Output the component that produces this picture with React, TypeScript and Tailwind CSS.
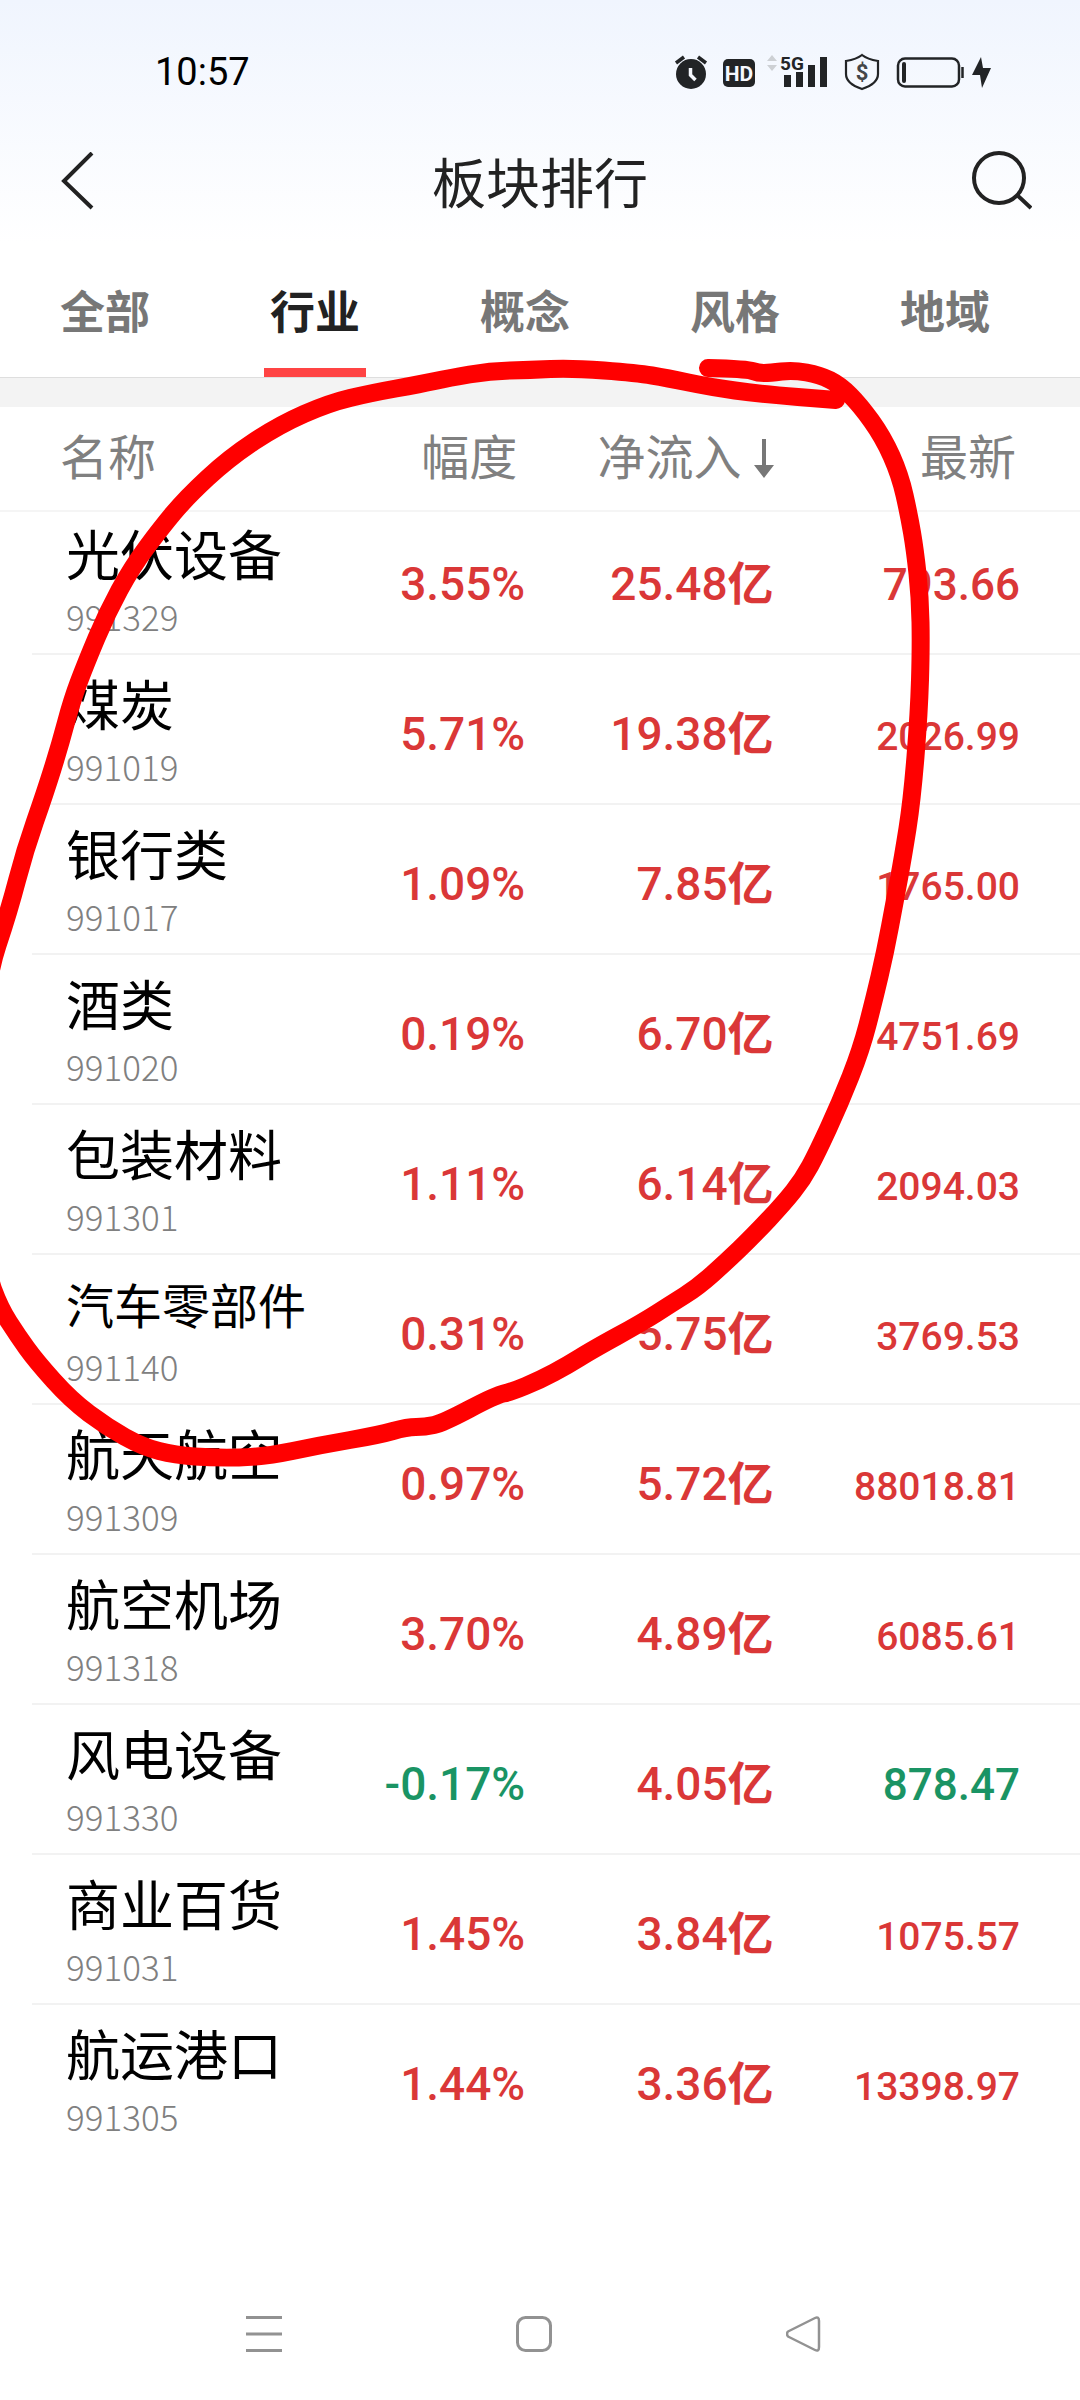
import { useState } from "react";

interface Sector {
    name: string;
    code: string;
    change: string;
    inflow: string;
    latest: string;
}

const tabs = ["全部", "行业", "概念", "风格", "地域"];

// inflow is in 亿
const sectors: Sector[] = [
    { name: "光伏设备", code: "991329", change: "3.55%", inflow: "25.48", latest: "793.66" },
    { name: "煤炭", code: "991019", change: "5.71%", inflow: "19.38", latest: "2026.99" },
    { name: "银行类", code: "991017", change: "1.09%", inflow: "7.85", latest: "1765.00" },
    { name: "酒类", code: "991020", change: "0.19%", inflow: "6.70", latest: "4751.69" },
    { name: "包装材料", code: "991301", change: "1.11%", inflow: "6.14", latest: "2094.03" },
    { name: "汽车零部件", code: "991140", change: "0.31%", inflow: "5.75", latest: "3769.53" },
    { name: "航天航空", code: "991309", change: "0.97%", inflow: "5.72", latest: "88018.81" },
    { name: "航空机场", code: "991318", change: "3.70%", inflow: "4.89", latest: "6085.61" },
    { name: "风电设备", code: "991330", change: "-0.17%", inflow: "4.05", latest: "878.47" },
    { name: "商业百货", code: "991031", change: "1.45%", inflow: "3.84", latest: "1075.57" },
    { name: "航运港口", code: "991305", change: "1.44%", inflow: "3.36", latest: "13398.97" },
];

// Freehand pen mark, in drawing order
const penPoints = [
    [708, 368], [747, 369], [758, 373], [770, 373], [793, 370], [820, 375], [840, 385], [860, 405], [883, 437],
    [900, 475], [909, 515], [915, 550], [920, 597], [921, 647], [919, 713], [912, 800], [903, 857], [895, 900],
    [885, 953], [874, 1000], [861, 1050], [840, 1103], [817, 1153], [803, 1179], [784, 1203], [753, 1236],
    [726, 1262], [698, 1287], [671, 1304], [643, 1322], [592, 1350], [568, 1365], [540, 1380], [511, 1392],
    [496, 1395], [443, 1423], [425, 1427], [407, 1427], [379, 1435], [321, 1445], [264, 1457], [214, 1458],
    [175, 1455], [143, 1447], [107, 1427], [71, 1400], [36, 1361], [18, 1336], [0, 1308], [-14, 1270],
    [-26, 1120], [-14, 980], [9, 911], [25, 850], [45, 793], [60, 745], [72, 700], [86, 663], [107, 613],
    [132, 567], [161, 528], [186, 498], [229, 458], [279, 425], [329, 403], [371, 393], [421, 384], [449, 378],
    [490, 371], [530, 370], [571, 368], [637, 373], [667, 378], [710, 387], [760, 394], [836, 400],
];

function toSmoothPath(points: number[][]) {
    let d = `M${points[0][0]} ${points[0][1]}`;
    for (let i = 1; i < points.length - 1; i++) {
        const [x, y] = points[i];
        const [nx, ny] = points[i + 1];
        d += `Q${x} ${y} ${(x + nx) / 2} ${(y + ny) / 2}`;
    }
    const [lx, ly] = points[points.length - 1];
    return `${d}L${lx} ${ly}`;
}

function PenMark() {
    return (
        <svg className="pointer-events-none absolute top-0 left-0 w-full" viewBox="0 0 1080 1500" fill="none" aria-hidden="true">
            <path d={toSmoothPath(penPoints)} stroke="#ff0000" strokeWidth="18" strokeLinecap="round" strokeLinejoin="round" />
        </svg>
    );
}

function StatusBar() {
    return (
        <div className="flex h-[120px] items-center justify-between pt-6 pr-[88px] pl-[155px]">
            <span className="text-[38px] leading-[48px] text-black">10:57</span>
            <svg className="h-10 w-[320px]" viewBox="672 52 320 40" fill="none" aria-hidden="true">
                {/* alarm */}
                <circle cx="691" cy="74" r="15" fill="#222426" />
                <path d="M676 63l8-6M698 57l8 6" stroke="#222426" strokeWidth="3.5" />
                <path d="M690.500 68v7l5 5" stroke="#f5f8fe" strokeWidth="3.5" />
                {/* HD */}
                <rect x="723" y="59" width="32" height="28" rx="5" fill="#222426" />
                <text x="739" y="81" textAnchor="middle" fontSize="21" fontWeight="700" fill="#f5f8fe">HD</text>
                {/* mobile signal */}
                <path d="M767 61l5-6 5 6zM767 65h10l-5 6z" fill="#cdd0d4" />
                <text x="780" y="70" fontSize="19" fontWeight="700" fill="#222426">5G</text>
                <path d="M784 75h7v12h-7zM796 72h7v15h-7zM808 65h7v22h-7zM820 57h7v30h-7z" fill="#222426" />
                {/* payment shield */}
                <path d="M862 55c5 4 10 5 16 6v13c0 8-7 12-16 15-9-3-16-7-16-15V61c6-1 11-2 16-6z" stroke="#222426" strokeWidth="2.2" />
                <text x="862" y="80" textAnchor="middle" fontSize="22" fontWeight="700" fill="#444648">$</text>
                {/* battery */}
                <rect x="898" y="58.500" width="61" height="28" rx="7" stroke="#222426" strokeWidth="2.500" />
                <rect x="902" y="62" width="4" height="21" rx="2" fill="#222426" />
                <path d="M962.500 67v11" stroke="#222426" strokeWidth="2.500" />
                <path d="M981 57l-9 18h8l2 13 9-20h-8z" fill="#222426" />
            </svg>
        </div>
    );
}

function TitleBar() {
    return (
        <header className="flex h-[124px] items-center justify-between px-12">
            <button type="button" aria-label="返回" className="flex h-16 w-16 items-center pl-3">
                <svg className="h-[60px] w-9" viewBox="0 0 36 60" fill="none">
                    <path d="M32 1L4 29l28 27" stroke="#222" strokeWidth="4" />
                </svg>
            </button>
            <h1 className="pt-2 text-[54px] leading-[64px] text-[#222]">板块排行</h1>
            <button type="button" aria-label="搜索" className="flex h-16 w-16 items-center justify-end">
                <svg className="h-16 w-16" viewBox="0 0 64 64" fill="none" stroke="#222" strokeWidth="4">
                    <circle cx="31" cy="28" r="25" />
                    <path d="M49 45l14 13" />
                </svg>
            </button>
        </header>
    );
}

function SectorRow({ sector }: { sector: Sector }) {
    const color = sector.change.startsWith("-") ? "text-[#1a9464]" : "text-[#da3737]";
    const nameSize = sector.name.length > 4 ? "text-[48px]" : "text-[54px]";
    const latestSize = sector.latest.length > 6 ? "text-[39px]" : "text-[44px]";
    const numberCell =
        "border-b-2 border-[#f2f2f2] p-0 pt-[49px] text-right align-baseline leading-[60px] font-medium group-first:pt-[42px] group-last:border-0";

    return (
        <tr className="group">
            <td className="p-0 pl-8 align-top">
                <div className="h-[150px] border-b-2 border-[#f2f2f2] pt-[19px] pl-[34px] group-first:h-[143px] group-first:pt-3 group-last:border-0">
                    <div className={`leading-[68px] whitespace-nowrap text-black ${nameSize}`}>{sector.name}</div>
                    <div className="font-['Noto_Sans_CJK_SC',sans-serif] text-[35px] leading-[48px] font-light text-[#808080]">{sector.code}</div>
                </div>
            </td>
            <td className={`${numberCell} pr-1 text-[46px] ${color}`}>{sector.change}</td>
            <td className={`${numberCell} pr-1 text-[46px] text-[#da3737]`}>
                {sector.inflow}
                <span className="font-bold">亿</span>
            </td>
            <td className={`${numberCell} pr-[60px] ${latestSize} ${color}`}>{sector.latest}</td>
        </tr>
    );
}

export default function App() {
    const [active, setActive] = useState("行业");

    return (
        <div className="relative flex min-h-screen flex-col overflow-hidden bg-white font-['Roboto','Noto_Sans_CJK_SC',sans-serif]">
            <div className="bg-linear-to-b from-[#f0f5fe] to-white">
                <StatusBar />
                <TitleBar />
            </div>

            <nav className="grid h-[134px] grid-cols-5 border-b border-[#dedede] pr-[30px]">
                {tabs.map((tab) => (
                    <button
                        key={tab}
                        type="button"
                        onClick={() => setActive(tab)}
                        className={`flex flex-col items-center justify-between pt-[38px] text-[45px] leading-[64px] font-bold ${tab === active ? "text-[#222]" : "text-[#777]"}`}
                    >
                        {tab}
                        <span className={`h-[9px] w-[102px] ${tab === active ? "bg-[#ff4444]" : ""}`} />
                    </button>
                ))}
            </nav>
            <div className="h-[29px] bg-[#f3f3f3]" />

            <table className="w-full table-fixed border-separate border-spacing-0">
                <thead>
                    <tr className="h-[105px] text-[48px] text-[#808080]">
                        <th className="w-[32%] border-b-2 border-[#f5f5f5] p-0 pl-[60px] text-left font-normal">名称</th>
                        <th className="border-b-2 border-[#f5f5f5] p-0 pr-3 text-right font-normal">幅度</th>
                        <th className="w-[23%] border-b-2 border-[#f5f5f5] p-0 pr-1 font-normal">
                            <button type="button" className="ml-auto flex items-center gap-3 whitespace-nowrap">
                                净流入
                                <svg className="h-10 w-5" viewBox="0 0 20 40" aria-hidden="true">
                                    <path d="M8 0h4v26h8L10 39 0 26h8z" fill="#777" />
                                </svg>
                            </button>
                        </th>
                        <th className="w-[28%] border-b-2 border-[#f5f5f5] p-0 pr-16 text-right font-normal">最新</th>
                    </tr>
                </thead>
                <tbody>
                    {sectors.map((s) => (
                        <SectorRow key={s.code} sector={s} />
                    ))}
                </tbody>
            </table>

            <footer className="mt-auto flex h-[132px] items-center justify-between pr-[258px] pl-[246px] text-[#929292]">
                <button type="button" aria-label="最近任务">
                    <svg className="h-9 w-9" viewBox="0 0 36 36" stroke="currentColor" strokeWidth="3">
                        <path d="M0 1.500h36M0 18h36M0 34.500h36" />
                    </svg>
                </button>
                <button type="button" aria-label="主屏幕">
                    <svg className="h-9 w-9" viewBox="0 0 36 36" fill="none" stroke="currentColor" strokeWidth="3">
                        <rect x="1.500" y="1.500" width="33" height="33" rx="8" />
                    </svg>
                </button>
                <button type="button" aria-label="返回上一级">
                    <svg className="h-9 w-9" viewBox="0 0 36 36" fill="none" stroke="currentColor" strokeWidth="2.500" strokeLinejoin="round">
                        <path d="M2 15.500L29 2q4-2 4 3v26q0 5-4 3L2 20.500q-2-2.500 0-5z" />
                    </svg>
                </button>
            </footer>

            <PenMark />
        </div>
    );
}
